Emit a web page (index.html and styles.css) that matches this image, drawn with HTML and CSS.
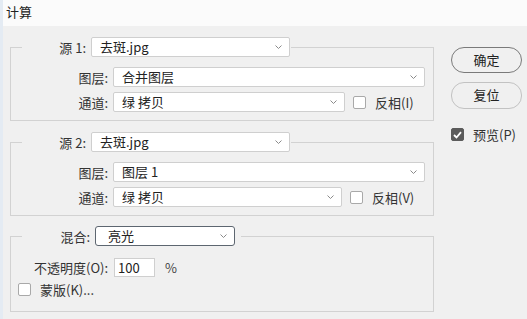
FILE: index.html
```html
<!DOCTYPE html>
<html lang="zh-CN">
<head>
<meta charset="utf-8">
<link rel="stylesheet" href="styles.css">
</head>
<body>
<div class="window">
  <div class="titlebar">计算</div>
  <div class="dialog">
    <div class="left">
      <fieldset class="group">
        <legend class="legend">
          <span class="lg-label">源 1:</span>
          <span class="select src"><span class="val">去斑.jpg</span><svg class="chev" width="7" height="4" viewBox="0 0 7 4"><path d="M0.5 0.5 L3.5 3.5 L6.5 0.5" fill="none" stroke="#8a8a8a" stroke-width="1"/></svg></span>
        </legend>
        <div class="row">
          <span class="label">图层:</span>
          <span class="select wide"><span class="val">合并图层</span><svg class="chev" width="7" height="4" viewBox="0 0 7 4"><path d="M0.5 0.5 L3.5 3.5 L6.5 0.5" fill="none" stroke="#8a8a8a" stroke-width="1"/></svg></span>
        </div>
        <div class="row">
          <span class="label">通道:</span>
          <span class="select chan"><span class="val">绿 拷贝</span><svg class="chev" width="7" height="4" viewBox="0 0 7 4"><path d="M0.5 0.5 L3.5 3.5 L6.5 0.5" fill="none" stroke="#8a8a8a" stroke-width="1"/></svg></span>
          <span class="check"></span>
          <span class="check-label">反相(I)</span>
        </div>
      </fieldset>

      <fieldset class="group g2">
        <legend class="legend">
          <span class="lg-label">源 2:</span>
          <span class="select src"><span class="val">去斑.jpg</span><svg class="chev" width="7" height="4" viewBox="0 0 7 4"><path d="M0.5 0.5 L3.5 3.5 L6.5 0.5" fill="none" stroke="#8a8a8a" stroke-width="1"/></svg></span>
        </legend>
        <div class="row">
          <span class="label">图层:</span>
          <span class="select wide"><span class="val">图层 1</span><svg class="chev" width="7" height="4" viewBox="0 0 7 4"><path d="M0.5 0.5 L3.5 3.5 L6.5 0.5" fill="none" stroke="#8a8a8a" stroke-width="1"/></svg></span>
        </div>
        <div class="row">
          <span class="label">通道:</span>
          <span class="select chan2"><span class="val">绿 拷贝</span><svg class="chev" width="7" height="4" viewBox="0 0 7 4"><path d="M0.5 0.5 L3.5 3.5 L6.5 0.5" fill="none" stroke="#8a8a8a" stroke-width="1"/></svg></span>
          <span class="check"></span>
          <span class="check-label">反相(V)</span>
        </div>
      </fieldset>

      <fieldset class="group g3">
        <legend class="legend blend-legend">
          <span class="lg-label blend-label">混合:</span>
          <span class="select blend"><span class="val">亮光</span><svg class="chev" width="7" height="4" viewBox="0 0 7 4"><path d="M0.5 0.5 L3.5 3.5 L6.5 0.5" fill="none" stroke="#8a8a8a" stroke-width="1"/></svg></span>
        </legend>
        <div class="opacity-row">
          <span class="op-label">不透明度(O):</span>
          <span class="input">100</span>
          <span class="pct">%</span>
        </div>
        <div class="mask-row">
          <span class="check"></span>
          <span class="mask-label">蒙版(K)...</span>
        </div>
      </fieldset>
    </div>

    <div class="right">
      <div class="btn primary">确定</div>
      <div class="btn">复位</div>
      <div class="preview">
        <span class="check checked"><svg width="9" height="8" viewBox="0 0 9 8"><path d="M1 4 L3.5 6.5 L8 1.2" fill="none" stroke="#fff" stroke-width="1.8"/></svg></span>
        <span class="check-label">预览(P)</span>
      </div>
    </div>
  </div>
</div>
</body>
</html>
```

FILE: styles.css
```css
* { box-sizing: border-box; }
html, body {
  margin: 0;
  padding: 0;
  width: 527px;
  height: 319px;
  overflow: hidden;
  background: #f0f0f0;
}
body {
  font-family: "Noto Sans CJK SC", "Noto Sans", sans-serif;
  font-size: 13px;
  color: #333;
}
.window {
  height: 319px;
  border-left: 3px solid #e4ebf3;
  background: #f0f0f0;
}
.titlebar {
  height: 26px;
  background: #fbfbfb;
  padding-left: 3px;
  line-height: 24px;
  font-size: 13px;
  color: #222;
}
.dialog {
  display: flex;
  padding-left: 7px;
  padding-top: 11px;
}
.left {
  width: 424px;
  display: flex;
  flex-direction: column;
}
.group {
  margin: 0;
  padding: 10px 0 8px 0;
  border: 1px solid #d2d2d2;
  width: 424px;
  min-width: 0;
}
.g2 { margin-top: 11px; }
.g3 { margin-top: 10px; padding: 11px 0 14px 0; }
.legend {
  padding: 0 1px 0 0;
  margin-left: 11px;
  display: flex;
  align-items: center;
}
.blend-legend { padding-right: 6px; }
.lg-label {
  width: 64px;
  text-align: right;
  margin-right: 5px;
  color: #333;
}
.blend-label { width: 68px; }
.select {
  height: 20px;
  background: #fff;
  border: 1px solid #cfcfcf;
  border-radius: 2px;
  display: flex;
  align-items: center;
  justify-content: space-between;
  padding: 0 7px 0 8px;
  color: #222;
}
.select .val { line-height: 18px; }
.chev { flex: none; }
.src { width: 199px; }
.wide { width: 312px; }
.chan { width: 232px; }
.chan2 { width: 229px; }
.blend {
  width: 140px;
  border: 1px solid #5d6670;
  border-radius: 3px;
  padding-left: 12px;
}
.row {
  display: flex;
  align-items: center;
  height: 20px;
}
.row + .row { margin-top: 5px; }
.label {
  width: 97px;
  text-align: right;
  margin-right: 5px;
}
.check {
  width: 13px;
  height: 13px;
  border: 1px solid #a9a9a9;
  border-radius: 2px;
  background: #fff;
  margin-left: 8px;
  flex: none;
  display: flex;
  align-items: center;
  justify-content: center;
}
.check-label {
  margin-left: 9px;
  color: #333;
}
.opacity-row {
  display: flex;
  align-items: center;
  height: 20px;
  padding-left: 23px;
}
.op-label { width: 80px; }
.input {
  width: 41px;
  height: 19px;
  background: #fff;
  border: 1px solid #cfcfcf;
  padding-left: 3px;
  line-height: 17px;
  color: #222;
}
.pct {
  margin-left: 10px;
  color: #444;
}
.mask-row {
  display: flex;
  align-items: center;
  height: 15px;
  margin-top: 5px;
}
.mask-row .check { margin-left: 7px; }
.mask-label { margin-left: 9px; }
.right {
  margin-left: 17px;
  padding-top: 10px;
  width: 71px;
  display: flex;
  flex-direction: column;
}
.btn {
  height: 26px;
  border: 1px solid #c2c2c2;
  border-radius: 13px;
  text-align: center;
  line-height: 24px;
  color: #222;
}
.btn.primary { border-color: #7a7a7a; }
.btn + .btn { margin-top: 9px; height: 27px; }
.preview {
  margin-top: 16px;
  display: flex;
  align-items: center;
}
.preview .check { margin-left: 0; }
.check.checked {
  background: #5b5b5b;
  border-color: #5b5b5b;
}
```
